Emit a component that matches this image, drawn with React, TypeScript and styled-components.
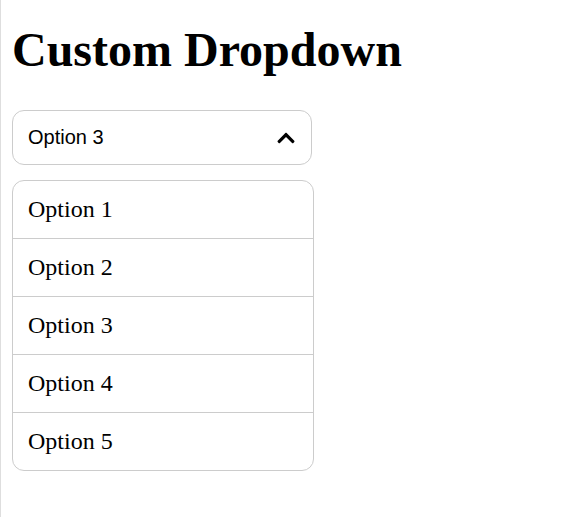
import React, { useState } from "react";
import styled, { createGlobalStyle } from "styled-components";
import { FaChevronUp, FaChevronDown } from "react-icons/fa";

const GlobalStyle = createGlobalStyle`
  html, body {
    margin: 0;
    padding: 0;
    background: #ffffff;
  }
  body {
    min-height: 100vh;
    border-left: 1px solid #dedede;
    box-sizing: border-box;
    font-family: "Liberation Serif", "Times New Roman", serif;
    color: #000;
  }
`;

const Page = styled.div`
  padding: 22px 11px 0 11px;
`;

const Title = styled.h1`
  margin: 0 0 33px 0;
  font-family: "Liberation Serif", "Times New Roman", serif;
  font-size: 48px;
  font-weight: bold;
  line-height: 55px;
  color: #000;
`;

const Dropdown = styled.div`
  width: 300px;
`;

const Toggle = styled.button`
  width: 100%;
  height: 55px;
  box-sizing: border-box;
  display: flex;
  align-items: center;
  justify-content: space-between;
  padding: 0 15px;
  background: #fff;
  border: 1px solid #cccccc;
  border-radius: 12px;
  font-family: "Liberation Sans", Arial, sans-serif;
  font-size: 20px;
  color: #000;
  cursor: pointer;
  text-align: left;
`;

const Menu = styled.ul`
  list-style: none;
  width: 100%;
  box-sizing: content-box;
  margin: 15px 0 0 0;
  padding: 0;
  border: 1px solid #cccccc;
  border-radius: 12px;
  overflow: hidden;
  background: #fff;
`;

const Item = styled.li<{ $last: boolean }>`
  padding: 15px;
  font-family: "Liberation Serif", "Times New Roman", serif;
  font-size: 24px;
  line-height: 27px;
  color: #000;
  border-bottom: ${(p) => (p.$last ? "none" : "1px solid #cccccc")};
  cursor: pointer;
`;

const options = ["Option 1", "Option 2", "Option 3", "Option 4", "Option 5"];

export default function App() {
  const [open, setOpen] = useState(true);
  const [selected, setSelected] = useState("Option 3");

  return (
    <Page>
      <GlobalStyle />
      <Title>Custom Dropdown</Title>
      <Dropdown>
        <Toggle onClick={() => setOpen(!open)}>
          <span>{selected}</span>
          {open ? <FaChevronUp size={20} /> : <FaChevronDown size={20} />}
        </Toggle>
        {open && (
          <Menu>
            {options.map((o, i) => (
              <Item
                key={o}
                $last={i === options.length - 1}
                onClick={() => setSelected(o)}
              >
                {o}
              </Item>
            ))}
          </Menu>
        )}
      </Dropdown>
    </Page>
  );
}
